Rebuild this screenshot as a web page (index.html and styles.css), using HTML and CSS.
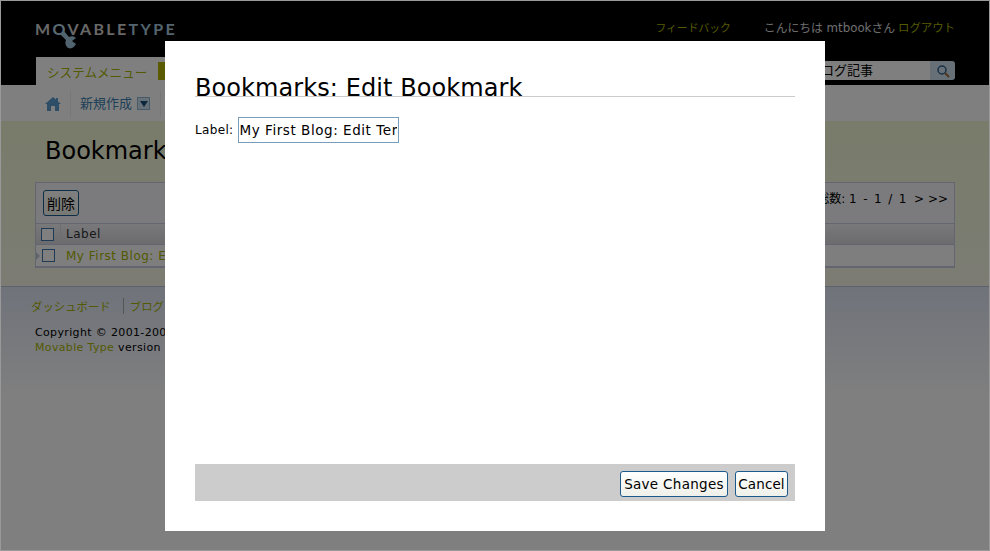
FILE: index.html
```html
<!DOCTYPE html>
<html lang="ja">
<head>
<meta charset="utf-8">
<title>Bookmarks: Edit Bookmark</title>
<link rel="stylesheet" href="styles.css">
</head>
<body>
<div class="page">
  <header class="top">
    <div class="top-row">
      <div class="logo">
        <span class="logo-text">M<span class="logo-o">O</span>VABLE<span class="logo-type">TYPE</span></span>
        <svg class="wrench" viewBox="0 0 26 26" width="26" height="26" aria-hidden="true"><path d="M6 8 L10 5 L15 11 C17 10 20 10 22 12 L18 15 L22 18 C20 22 16 24 13 21 C11 19 11 16 12 14 Z" fill="#a0c6dc"/></svg>
      </div>
      <div class="user">
        <a class="link feedback" href="#">フィードバック</a>
        <span class="greeting">こんにちは mtbookさん</span>
        <a class="link logout" href="#">ログアウト</a>
      </div>
    </div>
    <div class="tab-row">
      <div class="tab"><span class="tab-label">システムメニュー</span><span class="tab-chip"></span></div>
      <div class="search">
        <span class="search-field">ブログ記事</span>
        <span class="search-btn">
          <svg viewBox="0 0 14 14" width="14" height="14" aria-hidden="true"><circle cx="6" cy="6" r="4" fill="#cfe0ee" stroke="#2f628c" stroke-width="1.5"/><path d="M9 9 L13 13" stroke="#9c6a3a" stroke-width="2"/></svg>
        </span>
      </div>
    </div>
  </header>
  <nav class="subnav">
    <svg class="home" viewBox="0 0 16 14" width="16" height="14" aria-hidden="true"><path d="M8 0 L11 2.6 L11 1 L13 1 L13 4.4 L16 7 L14 7 L14 14 L10 14 L10 9 L6 9 L6 14 L2 14 L2 7 L0 7 Z" fill="#5a9ccc"/></svg>
    <span class="nav-item">新規作成</span>
    <span class="nav-drop"><svg viewBox="0 0 8 6" width="8" height="6" aria-hidden="true"><path d="M0 0 H8 L4 6 Z" fill="#1f4f78"/></svg></span>
    <span class="nav-sep"></span>
  </nav>
  <main class="content">
    <h1 class="page-title">Bookmarks</h1>
    <section class="listing">
      <div class="actions">
        <button class="btn btn-delete" type="button">削除</button>
        <span class="pager">総数: <span class="pager-range">1 - 1 / 1</span> &nbsp;&gt; &gt;&gt;</span>
      </div>
      <div class="head-row">
        <span class="cell-check"><span class="box"></span></span>
        <span class="cell-label">Label</span>
      </div>
      <div class="data-row">
        <span class="row-arrow"></span>
        <span class="cell-check"><span class="box"></span></span>
        <a class="link cell-label" href="#">My First Blog: Edit Template</a>
      </div>
    </section>
  </main>
  <footer class="foot">
    <div class="foot-links"><a class="link" href="#">ダッシュボード</a><a class="link foot-next" href="#">ブログ</a></div>
    <p class="copy">Copyright © 2001-2007 Six Apart.<br><a class="link" href="#">Movable Type</a> version 4.0</p>
  </footer>
</div>
<div class="overlay"></div>
<div class="modal">
  <h2 class="modal-title">Bookmarks: Edit Bookmark</h2>
  <form class="modal-form">
    <div class="field"><label for="lbl">Label:</label><input id="lbl" class="input" type="text" value="My First Blog: Edit Template"></div>
    <div class="modal-actions">
      <button class="btn btn-save" type="button">Save Changes</button>
      <button class="btn btn-cancel" type="button">Cancel</button>
    </div>
  </form>
</div>
</body>
</html>
```
FILE: styles.css
```css
* { box-sizing: border-box; }
html, body { margin: 0; height: 100%; overflow: hidden; }
body { font-family: "DejaVu Sans", Verdana, "Noto Sans CJK JP", sans-serif; font-size: 11px; color: #000; background: #fff; }
.page { height: 551px; display: flex; flex-direction: column; }
.link { color: #a8b400; text-decoration: none; }
.top { background: #000; height: 85px; padding: 0 35px; display: flex; flex-direction: column; justify-content: space-between; }
.top-row { display: flex; justify-content: space-between; padding-top: 18px; }
.logo { position: relative; width: 140px; height: 30px; }
.logo-text { display: block; color: #d0d0d0; font: 700 16px/20px Lato, sans-serif; letter-spacing: 2.35px; white-space: nowrap; margin-top: 1px; }
.logo-o { color: #b8d8ea; }
.logo-type { color: #a8c8dc; }
.wrench { position: absolute; left: 19px; top: 8px; }
.user { display: flex; align-items: center; height: 17px; font-size: 11.8px; color: #ddd; }
.feedback { margin-right: 33px; font-size: 10.8px; }
.greeting { margin-right: 3px; }
.logout { font-size: 11.4px; }
.tab-row { display: flex; justify-content: space-between; align-items: flex-end; }
.tab { height: 28px; width: 131px; margin-left: 1px; background: #fff; display: flex; align-items: center; padding-left: 11px; gap: 11px; font-size: 12.6px; }
.tab-label { color: #a8b400; white-space: nowrap; }
.tab-chip { flex: none; width: 20px; height: 18px; background: #b5b500; }
.search { display: flex; height: 19px; margin-bottom: 5px; width: 147px; font-size: 13px; }
.search-field { flex: 1; background: #fff; line-height: 19px; white-space: nowrap; }
.search-btn { width: 25px; background: #cfe0ec; border-radius: 0 3px 3px 0; display: flex; align-items: center; justify-content: center; }
.subnav { height: 36px; background: #fff; display: flex; align-items: center; padding: 1px 0 0 45px; font-size: 13px; color: #3d7eb0; position: relative; }
.home { margin-right: 9px; }
.nav-item { margin-right: 5px; border-left: 1px solid #eee; padding-left: 9px; line-height: 26px; }
.nav-drop { width: 13px; height: 13px; background: #cfe3f2; border: 1px solid #8fb4d0; display: flex; align-items: center; justify-content: center; }
.nav-sep { width: 1px; height: 26px; margin-left: 10px; background: #eee; }
.content { height: 165px; background: linear-gradient(#f2f8d4, #f8f9e8); padding: 0 35px; }
.page-title { margin: 14px 0 0 10px; font-size: 24px; font-weight: normal; line-height: 32px; }
.listing { margin-top: 15px; border: 1px solid #c6cde0; border-bottom-width: 2px; background: #f6f7fb; height: 86px; }
.actions { height: 41px; display: flex; align-items: flex-start; justify-content: space-between; padding: 7px 6px 0 7px; border-bottom: 1px solid #c6cde0; font-size: 12px; }
.pager { white-space: nowrap; margin-top: -1px; }
.pager-range { word-spacing: 2.7px; }
.head-row, .data-row { height: 21px; display: flex; align-items: center; font-size: 12px; background: #fdfdfd; letter-spacing: .5px; position: relative; }
.head-row { background: linear-gradient(#f2f2f6, #d8d8dc); border-bottom: 1px solid #c6cde0; color: #333; }
.cell-check { width: 25px; height: 100%; display: flex; align-items: center; justify-content: center; border-right: 1px solid #ddd; }
.head-row .cell-check { padding-right: 2px; }
.data-row .cell-check { border-right: 0; }
.row-arrow { position: absolute; left: 0; top: 7px; border-left: 4px solid #c0c8d8; border-top: 4px solid transparent; border-bottom: 4px solid transparent; }
.box { width: 13px; height: 13px; border: 1px solid #3f74a8; background: #fff; }
.cell-label { padding-left: 5px; white-space: nowrap; }
.foot { flex: 1; background: linear-gradient(#dfe6f5, #fff 110px); border-top: 1px solid #b8c4d8; padding: 11px 31px; }
.foot-links { font-size: 11.4px; display: flex; height: 17px; align-items: center; margin-top: -1px; }
.foot-next { margin-left: 12px; padding-left: 6px; border-left: 1px solid #aaa; }
.copy { margin: 11px 0 0 4px; font-size: 11px; line-height: 15px; letter-spacing: .35px; }
.overlay { position: fixed; inset: 0; background: rgba(0, 0, 0, .5); border: 1px solid #999; }
.modal { position: absolute; left: 165px; top: 41px; width: 660px; height: 490px; background: #fff; padding: 30px; display: flex; flex-direction: column; }
.modal-title { margin: 0; height: 26px; font-size: 24px; font-weight: normal; line-height: 34px; letter-spacing: .08px; border-bottom: 1px solid #ccc; white-space: nowrap; }
.modal-form { flex: 1; display: flex; flex-direction: column; justify-content: space-between; }
.field { display: flex; align-items: center; gap: 4px; margin-top: 20px; font-size: 12px; letter-spacing: .35px; }
.input { width: 161px; height: 26px; border: 1px solid #7a9dbd; padding: 0 1px; font: 13.5px "DejaVu Sans", sans-serif; letter-spacing: .55px; outline: 0; }
.modal-actions { height: 37px; background: #ccc; display: flex; align-items: center; justify-content: flex-end; gap: 7px; padding: 2px 7px 0 0; }
.btn { height: 26px; padding: 0; border: 1px solid #1c5a8c; border-radius: 3px; background: linear-gradient(#fff, #f0f0ea); font: 13.5px "DejaVu Sans", "Noto Sans CJK JP", sans-serif; letter-spacing: .3px; color: #000; }
.btn-save { width: 108px; }
.btn-cancel { width: 53px; letter-spacing: .1px; }
.btn-delete { width: 36px; font-size: 14px; letter-spacing: 0; }
```
